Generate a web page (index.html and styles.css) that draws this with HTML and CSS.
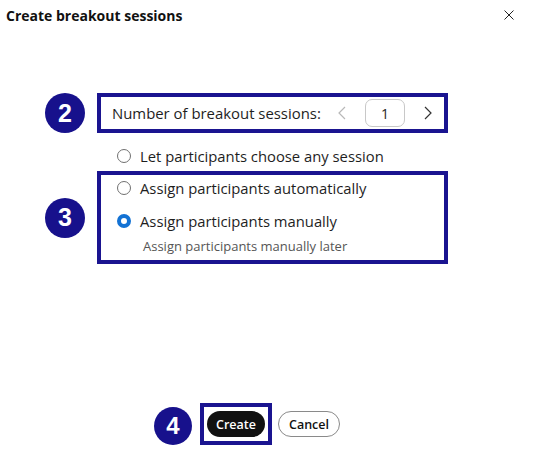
FILE: index.html
```html
<!DOCTYPE html>
<html lang="en">
<head>
  <meta charset="UTF-8">
  <title>Create breakout sessions</title>
  <link rel="stylesheet" href="styles.css">
</head>
<body>

  <!-- Dialog header -->
  <div class="header">
    <h1 class="title">Create breakout sessions</h1>
    <button class="close" aria-label="Close">
      <svg width="10" height="10" viewBox="0 0 10 10">
        <path d="M0.5 0.5 L9.5 9.5 M9.5 0.5 L0.5 9.5" stroke="#222" stroke-width="1" fill="none"/>
      </svg>
    </button>
  </div>

  <div class="content">
    <!-- Step 2: number of sessions -->
    <div class="step">
      <span class="badge">2</span>
      <div class="frame count-frame">
        <span class="label">Number of breakout sessions:</span>
        <div class="stepper">
          <svg class="chevron disabled" width="8" height="14" viewBox="0 0 8 14">
            <path d="M7 1 L1 7 L7 13" stroke="#b8b8b8" stroke-width="1.2" fill="none"/>
          </svg>
          <span class="count">1</span>
          <svg class="chevron" width="8" height="14" viewBox="0 0 8 14">
            <path d="M1 1 L7 7 L1 13" stroke="#333" stroke-width="1.2" fill="none"/>
          </svg>
        </div>
      </div>
    </div>

    <label class="option free">
      <span class="radio"></span>
      Let participants choose any session
    </label>

    <!-- Step 3: assignment -->
    <div class="step">
      <span class="badge">3</span>
      <div class="frame assign-frame">
        <label class="option">
          <span class="radio"></span>
          Assign participants automatically
        </label>
        <label class="option checked">
          <span class="radio on"></span>
          Assign participants manually
        </label>
        <div class="hint">Assign participants manually later</div>
      </div>
    </div>

    <!-- Step 4: actions -->
    <div class="step actions">
      <span class="badge">4</span>
      <div class="frame btn-frame">
        <button class="btn primary">Create</button>
      </div>
      <button class="btn secondary">Cancel</button>
    </div>
  </div>

</body>
</html>
```

FILE: styles.css
```css
body {
  margin: 0;
  font-family: 'Open Sans', 'Noto Sans', sans-serif;
  color: #1e1e1e;
  background: #fff;
}

/* Header */
.header {
  display: flex;
  justify-content: space-between;
  align-items: center;
  height: 30px;
  padding: 0 42px 0 6px;
}

.title {
  margin: 0;
  font-size: 14px;
  font-weight: 700;
  color: #111;
}

.close {
  border: none;
  background: none;
  padding: 0;
  display: flex;
}

/* Content */
.content {
  padding-top: 63px;
}

.step {
  display: flex;
  align-items: center;
  margin-left: 45px;
  gap: 12px;
}

.badge {
  width: 40px;
  height: 40px;
  border-radius: 50%;
  background: #17118c;
  color: #fff;
  font-family: 'Liberation Sans', Arial, sans-serif;
  font-weight: 700;
  font-size: 25px;
  display: flex;
  align-items: center;
  justify-content: center;
  flex-shrink: 0;
}

.frame {
  border: 4px solid #1a1490;
  box-sizing: border-box;
}

.count-frame {
  width: 351px;
  height: 40px;
  display: flex;
  align-items: center;
  justify-content: space-between;
  padding: 0 12px 0 11px;
}

.label {
  font-size: 14.9px;
}

.stepper {
  display: flex;
  align-items: center;
  gap: 19px;
}

.chevron {
  display: block;
}

.count {
  width: 40px;
  height: 28px;
  box-sizing: border-box;
  border: 1px solid #c8c8c8;
  border-radius: 7px;
  display: flex;
  align-items: center;
  justify-content: center;
  font-size: 14px;
}

/* Radio options */
.option {
  display: flex;
  align-items: center;
  gap: 9px;
  height: 24px;
  font-size: 14.8px;
}

.option.free {
  margin: 11px 0 3px 117px;
}

.radio {
  width: 14px;
  height: 14px;
  box-sizing: border-box;
  border: 1px solid #707070;
  border-radius: 50%;
  flex-shrink: 0;
}

.radio.on {
  border: 4.5px solid #1372d4;
  background: #fff;
}

.assign-frame {
  width: 351px;
  height: 93px;
  padding: 1px 0 0 16px;
}

.assign-frame .option + .option {
  margin-top: 9px;
}

.hint {
  margin: 4px 0 0 26px;
  font-size: 13px;
  line-height: 18px;
  color: #555;
}

/* Buttons */
.actions {
  margin: 139px 0 0 154px;
  gap: 8px;
}

.actions .badge {
  width: 38px;
  height: 38px;
  font-size: 24px;
  margin-top: 3px;
}

.btn-frame {
  padding: 4px 3px;
}

.btn {
  height: 26px;
  border-radius: 13px;
  font-family: 'Open Sans', sans-serif;
  font-size: 12.5px;
  font-weight: 600;
  padding: 0;
}

.primary {
  width: 58px;
  background: #111;
  color: #fff;
  border: none;
  display: block;
}

.secondary {
  width: 62px;
  margin-left: -2px;
  background: #fff;
  color: #111;
  border: 1px solid #8a8a8a;
}
```
